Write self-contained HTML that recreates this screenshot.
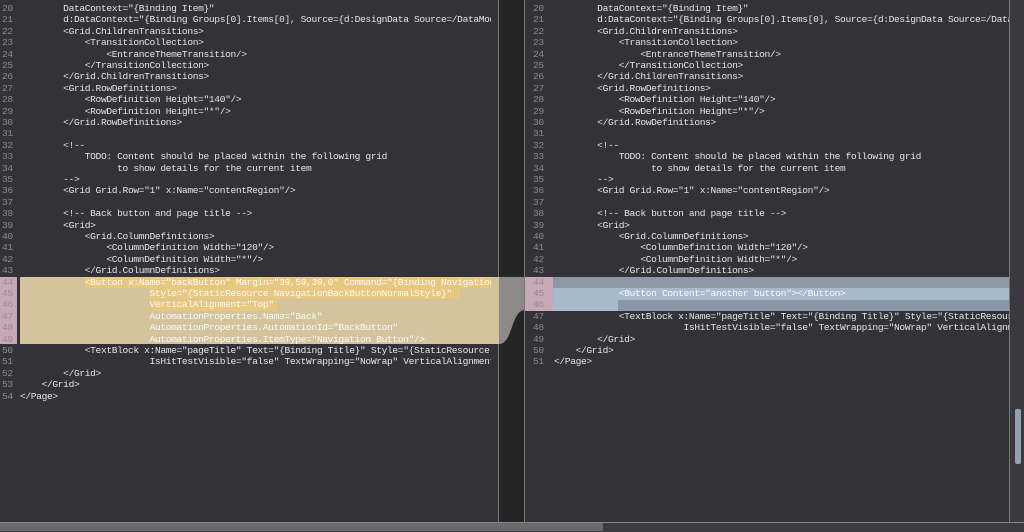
<!DOCTYPE html>
<html><head><style>
body{margin:0;width:1024px;height:531px;background:#252525;overflow:hidden;position:relative;font-family:"Liberation Mono",monospace;font-size:9.6px;}
.p{position:absolute;top:0;height:522px;background:#333238;overflow:hidden}
.l{position:absolute;height:11.4px;line-height:11.4px;white-space:pre;color:#e4e4e4;letter-spacing:-0.36px}
.n{position:absolute;height:11.4px;line-height:11.4px;color:#8a8a8a;letter-spacing:-0.36px}
.hl{position:absolute}
</style></head><body>
<div class="p" style="left:0;width:491px;border-right:1px solid #777">
<div class="hl" style="left:0;top:277px;width:17px;height:67px;background:#c6a9b4"></div>
<div class="hl" style="left:20px;top:277px;width:480px;height:67px;background:#d3c49d"></div>
<div class="hl" style="left:85px;top:277px;width:410px;height:11.4px;background:#e8c780"></div>
<div class="hl" style="left:150px;top:288px;width:310px;height:11.4px;background:#e8c780"></div>
<div class="hl" style="left:150px;top:300px;width:127px;height:11.4px;background:#e8c780"></div>
<div id="L"></div>
</div>
<div style="position:absolute;left:491px;top:0;width:7px;height:522px;background:#333238;border-right:1px solid #777"></div>
<div class="hl" style="left:491px;top:277px;width:8px;height:67px;background:#d3c49d"></div>
<svg style="position:absolute;left:499px;top:277px" width="26" height="67"><path d="M0 0H26V33C12 33 14 67 0 67Z" fill="#8c8a86"/></svg>
<div class="p" style="left:524px;width:484px;border-left:1px solid #777;border-right:1px solid #777">
<div class="hl" style="left:0;top:277px;width:28px;height:34px;background:#c6a9b4"></div>
<div class="hl" style="left:28px;top:277px;width:460px;height:34px;background:#a9b9cc"></div>
<div class="hl" style="left:28px;top:277px;width:460px;height:11.4px;background:#8b98a8"></div>
<div class="hl" style="left:93px;top:300px;width:395px;height:11px;background:#8b98a8"></div>
<div id="R"></div>
</div>
<div style="position:absolute;left:1010px;top:0;width:14px;height:522px;background:#3a3a3e"></div>
<div style="position:absolute;left:1015px;top:409px;width:6px;height:55px;background:#8fa2ad;border-radius:2px"></div>
<div style="position:absolute;left:0;top:522px;width:1024px;height:9px;background:#3c3c40;border-top:1px solid #888"></div>
<div style="position:absolute;left:0;top:523px;width:603px;height:8px;background:#6a6a6e"></div>
<script>
var A=['        DataContext="{Binding Item}"','        d:DataContext="{Binding Groups[0].Items[0], Source={d:DesignData Source=/DataModel/SampleData.json}}"','        <Grid.ChildrenTransitions>','            <TransitionCollection>','                <EntranceThemeTransition/>','            </TransitionCollection>','        </Grid.ChildrenTransitions>','        <Grid.RowDefinitions>','            <RowDefinition Height="140"/>','            <RowDefinition Height="*"/>','        </Grid.RowDefinitions>','','        <!--','            TODO: Content should be placed within the following grid','                  to show details for the current item','        -->','        <Grid Grid.Row="1" x:Name="contentRegion"/>','','        <!-- Back button and page title -->','        <Grid>','            <Grid.ColumnDefinitions>','                <ColumnDefinition Width="120"/>','                <ColumnDefinition Width="*"/>','            </Grid.ColumnDefinitions>'];
var L=A.concat(['            <Button x:Name="backButton" Margin="39,59,39,0" Command="{Binding NavigationHelper.GoBackCommand}"','                        Style="{StaticResource NavigationBackButtonNormalStyle}"','                        VerticalAlignment="Top"','                        AutomationProperties.Name="Back"','                        AutomationProperties.AutomationId="BackButton"','                        AutomationProperties.ItemType="Navigation Button"/>','            <TextBlock x:Name="pageTitle" Text="{Binding Title}" Style="{StaticResource HeaderTextBlockStyle}"','                        IsHitTestVisible="false" TextWrapping="NoWrap" VerticalAlignment="Bottom"/>','        </Grid>','    </Grid>','</Page>']);
var R=A.concat(['','            <Button Content="another button"></Button>','','            <TextBlock x:Name="pageTitle" Text="{Binding Title}" Style="{StaticResource HeaderTextBlockStyle}"','                        IsHitTestVisible="false" TextWrapping="NoWrap" VerticalAlignment="Bottom"/>','        </Grid>','    </Grid>','</Page>']);
function f(id,arr,nx,cx){var h='';arr.forEach(function(t,i){var y=3+i*11.4;var hi=(id=='L'&&i>=24&&i<=29)||(id=='R'&&i>=24&&i<=26);
h+='<div class="n" style="left:'+nx+'px;top:'+y+'px'+(hi?';color:#9a8a92':'')+'">'+(20+i)+'</div><div class="l" style="left:'+cx+'px;top:'+y+'px'+(hi?';color:#fafafa':'')+'">'+t.replace(/&/g,'&amp;').replace(/</g,'&lt;')+'</div>';});
document.getElementById(id).innerHTML=h;}
f('L',L,2,20);f('R',R,8,29);
</script>
</body></html>
